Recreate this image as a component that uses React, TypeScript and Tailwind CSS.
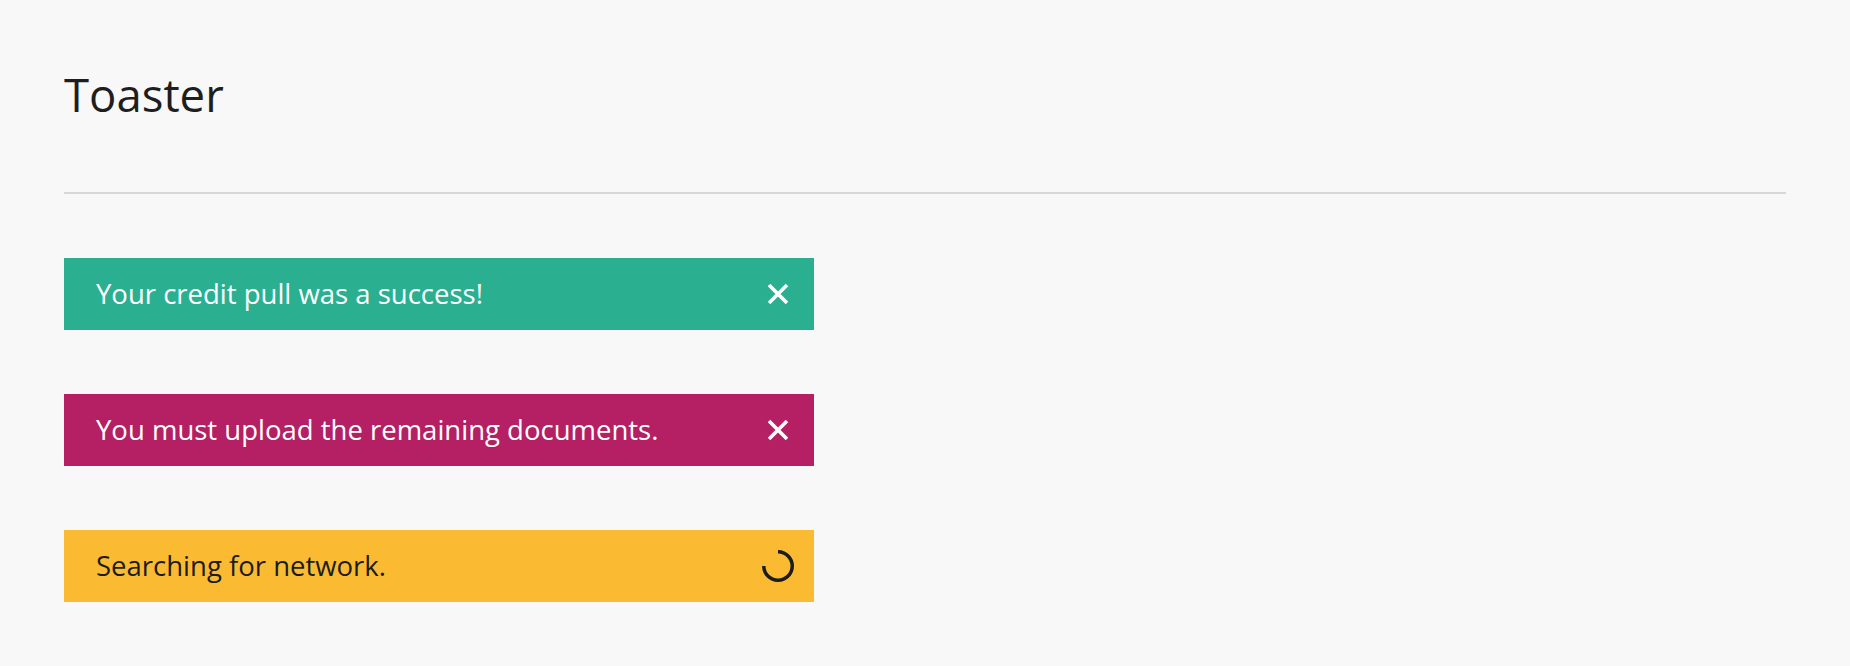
import React from "react";

function CloseIcon() {
  return (
    <svg width="24" height="24" viewBox="0 0 24 24" fill="none">
      <path d="M3 3 L21 21 M21 3 L3 21" stroke="#ffffff" strokeWidth="3.6" strokeLinecap="butt" />
    </svg>
  );
}

function Spinner() {
  return (
    <svg width="32" height="32" viewBox="0 0 32 32" fill="none" className="shrink-0">
      <path d="M16 1.75 A14.25 14.25 0 1 1 1.75 16" stroke="#1c1c1c" strokeWidth="3.5" />
    </svg>
  );
}

export default function App() {
  return (
    <div className="min-h-screen bg-[#f8f8f8] px-16 pt-[63px]" style={{ fontFamily: '"Open Sans", "Noto Sans", sans-serif' }}>
      <h1 className="text-[45.5px] font-[380] leading-[62px] text-[#1e1e1e]">Toaster</h1>
      <div className="mt-[67px] h-[2px] bg-[#d8d8d8]" />
      <div className="mt-16 flex flex-col gap-16">
        <div className="flex h-[72px] w-[750px] items-center justify-between bg-[#2aaf91] pl-8 pr-6">
          <span className="text-[27.5px] text-white">Your credit pull was a success!</span>
          <div className="flex w-6 items-center justify-center"><CloseIcon /></div>
        </div>
        <div className="flex h-[72px] w-[750px] items-center justify-between bg-[#b51f64] pl-8 pr-6">
          <span className="text-[27.5px] text-white">You must upload the remaining documents.</span>
          <div className="flex w-6 items-center justify-center"><CloseIcon /></div>
        </div>
        <div className="flex h-[72px] w-[750px] items-center justify-between bg-[#fabb33] pl-8 pr-6">
          <span className="text-[27.5px] text-[#1c1c1c]">Searching for network.</span>
          <div className="flex w-6 items-center justify-center"><Spinner /></div>
        </div>
      </div>
    </div>
  );
}
